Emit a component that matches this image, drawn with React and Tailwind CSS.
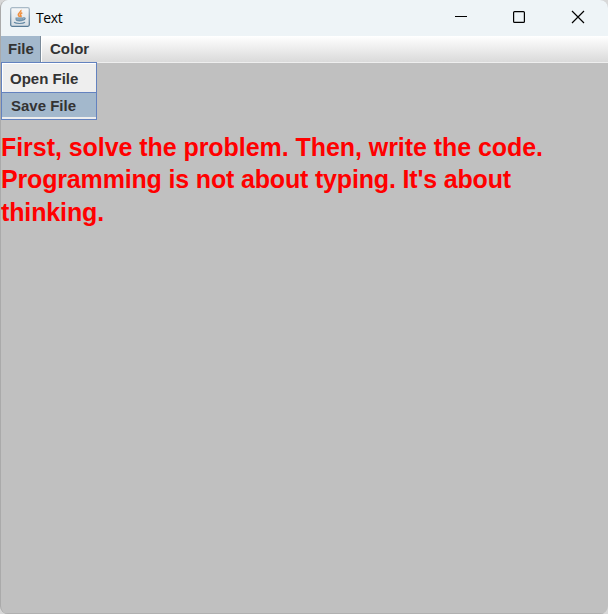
function JavaIcon() {
  return (
    <svg width="20" height="20" viewBox="0 0 20 20" fill="none" className="shrink-0">
      <defs>
        <linearGradient id="tile" x1="0" y1="0" x2="0" y2="1">
          <stop offset="0" stopColor="#f6f8f9" />
          <stop offset="1" stopColor="#d5dde3" />
        </linearGradient>
        <linearGradient id="edge" x1="0" y1="0" x2="0" y2="1">
          <stop offset="0" stopColor="#a9bac7" />
          <stop offset="1" stopColor="#587b96" />
        </linearGradient>
      </defs>
      <rect x="0.7" y="0.7" width="18.6" height="18.6" rx="1.5" fill="url(#tile)" stroke="url(#edge)" strokeWidth="1.3" />
      <path d="M10.8 3c1.2 2-3.6 3-2.4 5.2.3.7 1 1.200 1.300 1.800M12.300 5.800c-2 .8-2.500 1.700-1.500 2.800.5.6.2 1.100-.3 1.500" stroke="#ef9040" strokeWidth="1.6" />
      <path d="M5.500 10.600h8v1.900c0 1.300-1.300 2-4 2s-4-.7-4-2z" fill="#6f92ac" />
      <path d="M6.500 12h6" stroke="#b4c5d1" strokeWidth="0.7" />
      <path d="M13.300 10.800c2.600-.5 2.400 2-.5 2.300M4 15.300c2.500 1.700 9 1.500 11 0" stroke="#6489a5" strokeWidth="1.2" />
    </svg>
  );
}

function TitleBar() {
  return (
    <header className="flex h-9 shrink-0 items-start bg-[#eef4f7] pl-[9px]">
      <div className="pt-[7px]"><JavaIcon /></div>
      <span className="ml-[6px] pt-[8px] font-['Open_Sans',sans-serif] text-[14px] leading-[20px] tracking-[-0.35px] text-black">Text</span>
      <div className="ml-auto mr-px flex h-[34px] items-center text-black">
        <svg width="58" height="34" stroke="currentColor" className="block"><path d="M23 16.500h12" /></svg>
        <svg width="58" height="34" fill="none" stroke="currentColor" strokeWidth="1.2" className="block"><rect x="23.600" y="11.600" width="10.800" height="10.800" rx="1" /></svg>
        <svg width="59" height="34" stroke="currentColor" strokeWidth="1.2" className="block"><path d="M24 11l12 12M36 11L24 23" /></svg>
      </div>
    </header>
  );
}

function MenuBar() {
  return (
    <nav className="relative flex h-[27px] shrink-0 items-start border-b border-[#eeeeee] bg-linear-to-b from-white to-[#dadada] font-['Liberation_Sans',Arial,sans-serif] text-[15px] font-bold leading-[18px] text-[#333333]">
      <div className="h-[26px] w-[40px] border-r border-[#7a8a99] bg-[#a3b8cc] pl-[7px] pt-[4px]">File</div>
      <div className="h-[26px] border-l border-white pl-[8px] pt-[4px]">Color</div>
      <div className="absolute left-0 top-[26px] h-[58px] w-24 border border-[#6382bf] bg-[#eeeeee] pb-[2px] leading-[18px]">
        <div className="h-[29px] border-l border-t border-white pl-[7px] pt-[6px]">Open File</div>
        <div className="h-[25px] border-t border-[#6382bf] bg-[#a3b8cc] pl-[9px] pt-[4px]">Save File</div>
      </div>
    </nav>
  );
}

export default function App() {
  return (
    <div className="h-[614px] w-[608px] overflow-hidden bg-[#d8d8d8]">
      <div className="flex h-full flex-col overflow-hidden rounded-[8px] border-l border-[#aaaaaa] bg-[#c0c0c0]">
        <TitleBar />
        <MenuBar />
        <main className="grow border-b border-[#b0b0b0] pt-[68px] font-['Liberation_Sans',Arial,sans-serif] text-[25px] font-bold leading-8 text-[#ff0000]">
          <p className="whitespace-nowrap tracking-[-0.055px]">First, solve the problem. Then, write the code.</p>
          <p className="whitespace-nowrap tracking-[-0.165px]">Programming is not about typing. It's about</p>
          <p className="mt-px whitespace-nowrap tracking-[-0.12px]">thinking.</p>
        </main>
      </div>
    </div>
  );
}
